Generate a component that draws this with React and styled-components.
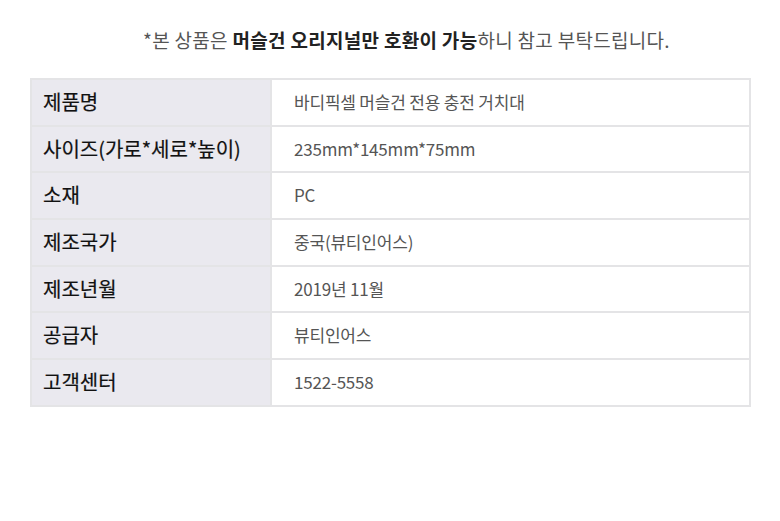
import React from 'react'
import styled, { createGlobalStyle } from 'styled-components'

const GlobalStyle = createGlobalStyle`
  html, body {
    margin: 0;
    padding: 0;
    background: #fff;
    font-family: "Noto Sans CJK KR", "Noto Sans", sans-serif;
  }
`

const Page = styled.div`
  width: 780px;
  height: 521px;
  padding: 26px 29px 0 30px;
  box-sizing: border-box;
`

const Notice = styled.p`
  margin: 0 0 24px;
  padding-left: 32px;
  text-align: center;
  font-size: 19px;
  line-height: 28px;
  color: #555;
  letter-spacing: 0.3px;

  strong {
    color: #222;
    font-weight: 700;
  }
`

const Table = styled.table`
  width: 721px;
  border-collapse: collapse;
  table-layout: fixed;
`

const Row = styled.tr`
  height: 46.7px;
`

const Label = styled.th`
  width: 240px;
  box-sizing: border-box;
  padding: 0 0 2px 11px;
  background: #eae9ef;
  border: 2px solid #e4e4e6;
  text-align: left;
  font-size: 20px;
  font-weight: 400;
  color: #111;
  -webkit-text-stroke: 0.2px #111;
  white-space: nowrap;
`

const Value = styled.td`
  padding: 0 0 2px 22px;
  background: #fff;
  border: 2px solid #e4e4e6;
  font-size: 17px;
  font-weight: 400;
  color: #555;
  letter-spacing: -0.2px;
`

const specs = [
  ['제품명', '바디픽셀 머슬건 전용 충전 거치대'],
  ['사이즈(가로*세로*높이)', '235mm*145mm*75mm'],
  ['소재', 'PC'],
  ['제조국가', '중국(뷰티인어스)'],
  ['제조년월', '2019년 11월'],
  ['공급자', '뷰티인어스'],
  ['고객센터', '1522-5558']
]

export default function App() {
  return (
    <>
      <GlobalStyle />
      <Page>
        <Notice>
          *본 상품은 <strong>머슬건 오리지널만 호환이 가능</strong>하니 참고 부탁드립니다.
        </Notice>
        <Table>
          <tbody>
            {specs.map(([term, desc]) => (
              <Row key={term}>
                <Label>{term}</Label>
                <Value>{desc}</Value>
              </Row>
            ))}
          </tbody>
        </Table>
      </Page>
    </>
  )
}
